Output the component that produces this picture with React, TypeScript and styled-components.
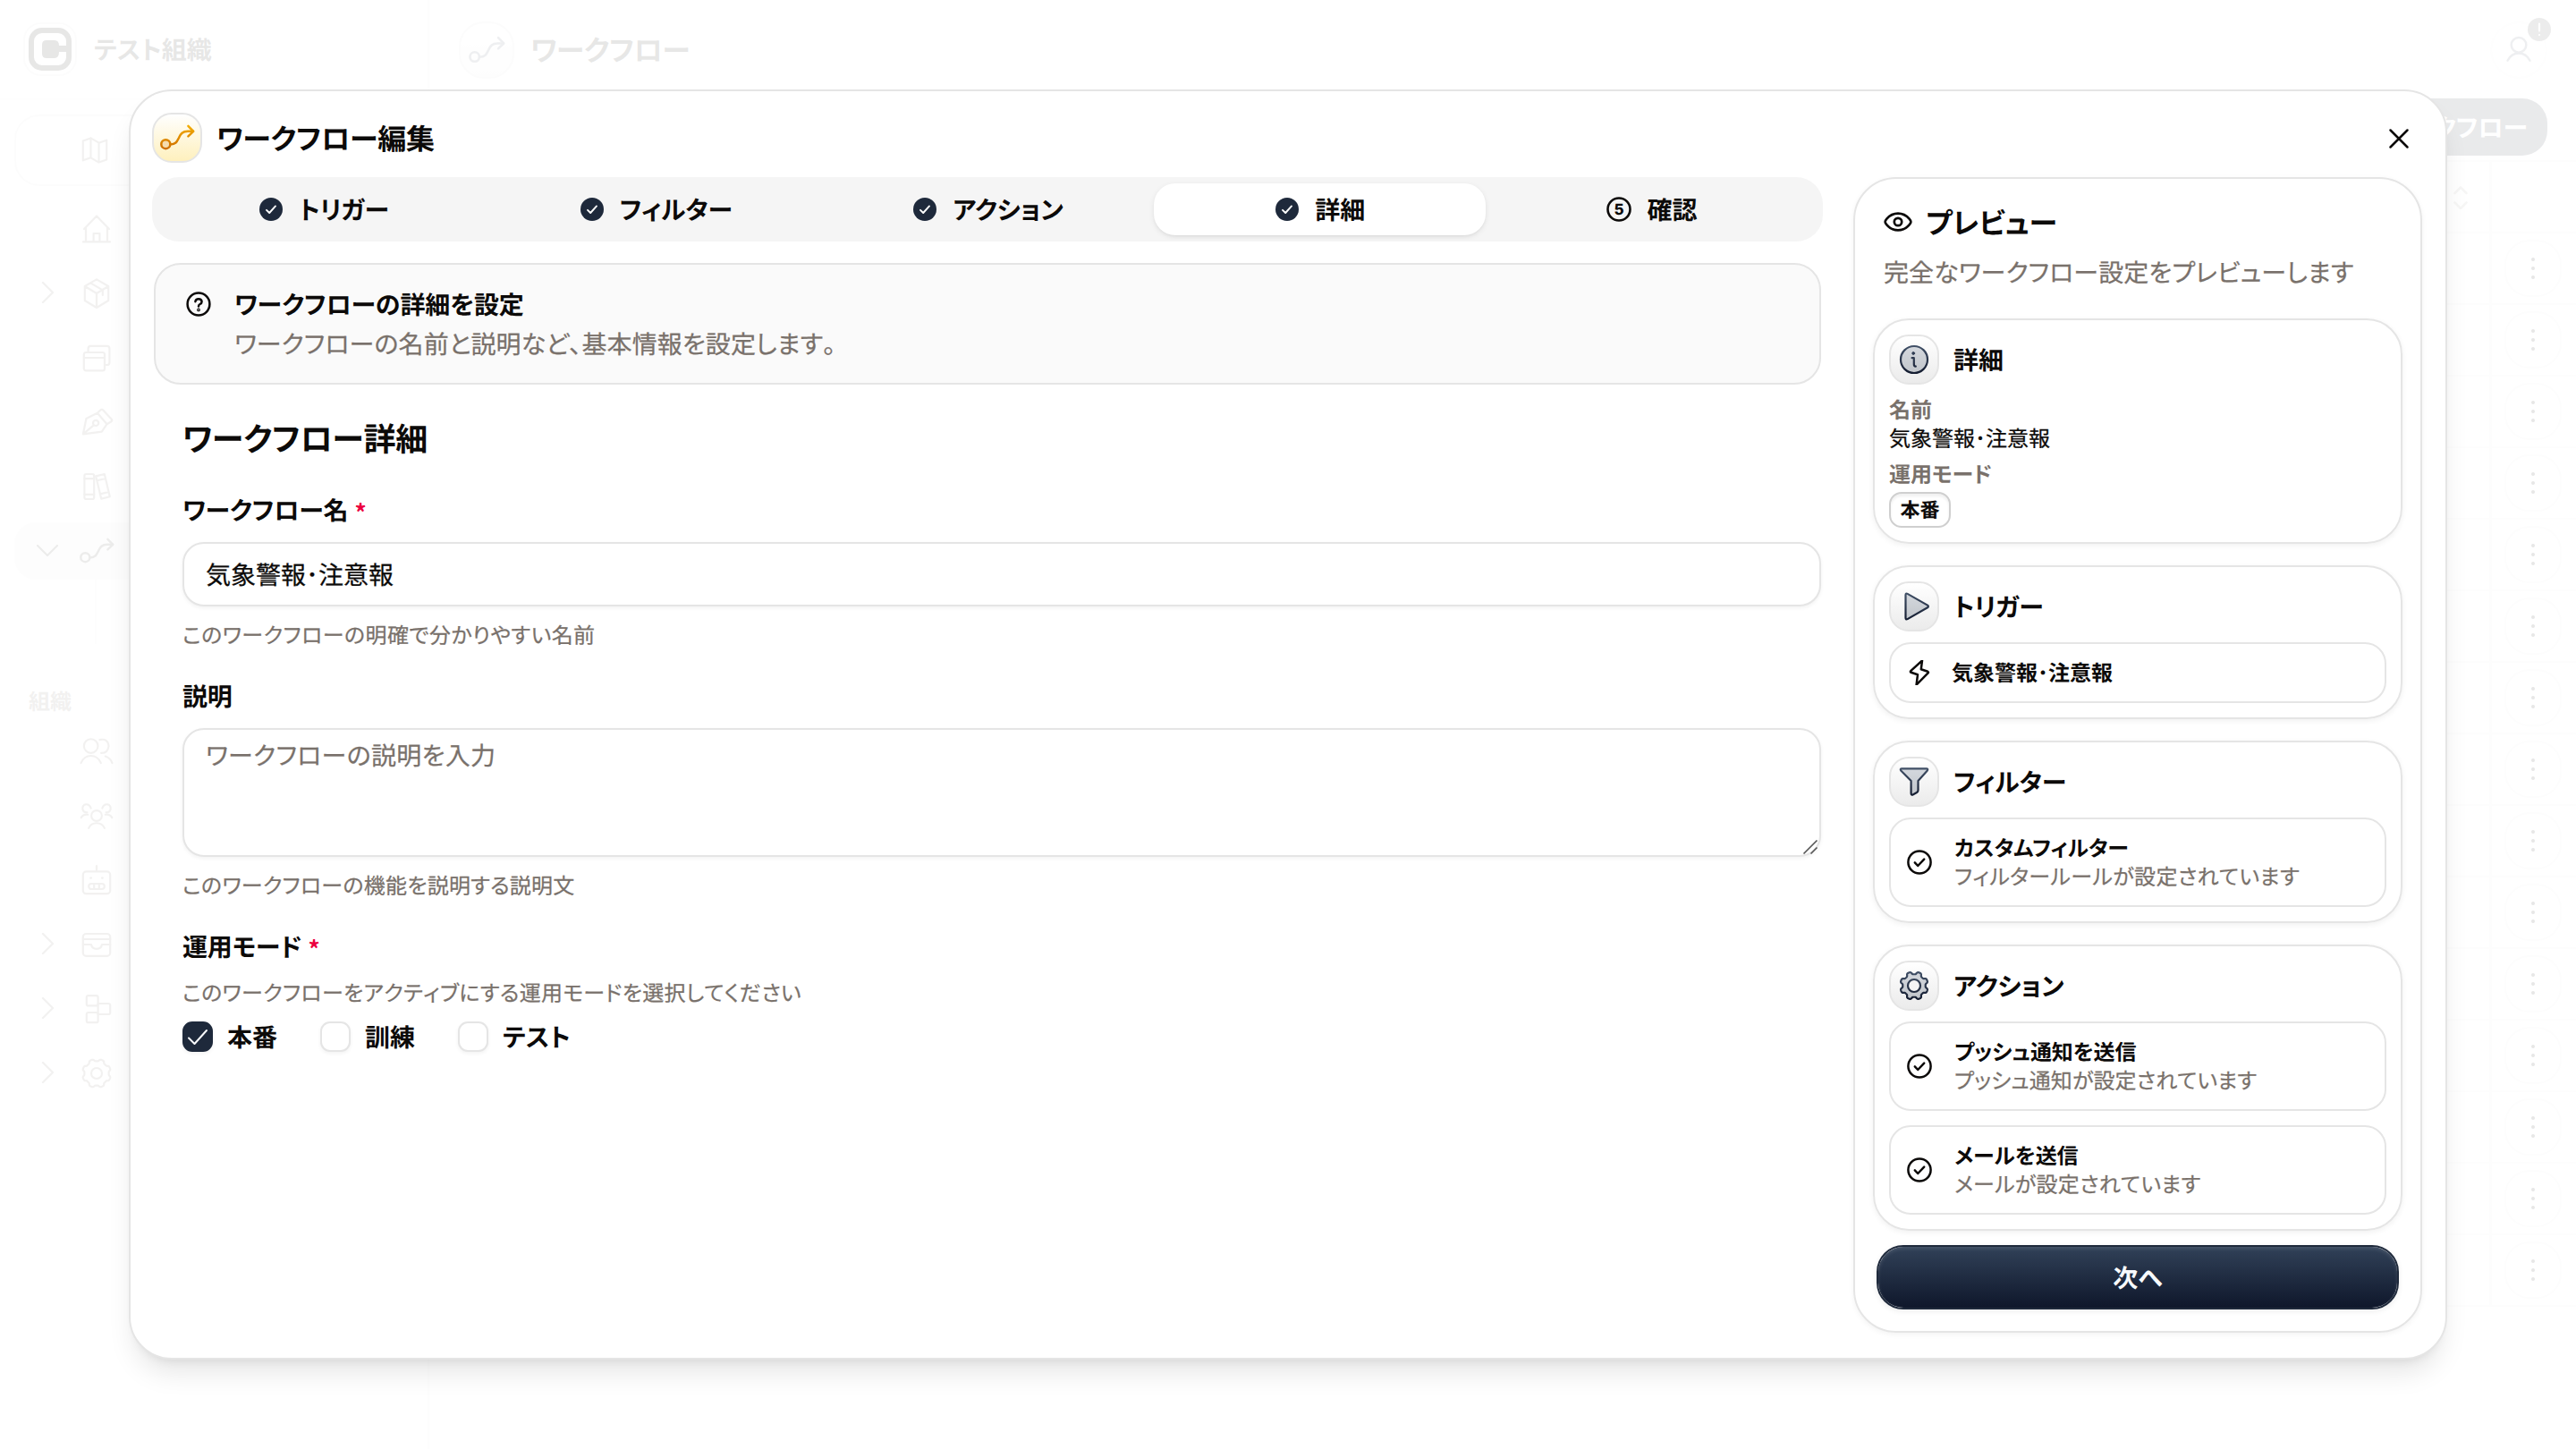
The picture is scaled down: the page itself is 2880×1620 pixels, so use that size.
import React from "react";
import styled, { createGlobalStyle, css } from "styled-components";

const ink = "#0c0a09";
const muted = "#79716b";
const line = "#e5e5e5";
const navy = "#1e293b";

const GlobalStyle = createGlobalStyle`
  *, *::before, *::after { box-sizing: border-box; }
  body {
    margin: 0;
    color: ${ink};
    background: #fff;
    font-family: "Noto Sans CJK JP", Inter, sans-serif;
    font-feature-settings: "palt";
    text-rendering: geometricPrecision;
    font-size: 28px;
    line-height: 40px;
  }
  h1, h2, h3, p { margin: 0; font-size: inherit; font-weight: inherit; }
  button, input, textarea {
    font: inherit;
    font-feature-settings: inherit;
    text-rendering: inherit;
    color: inherit;
  }
`;

/* ---------- icons ---------- */

type IconProps = {
  size?: number;
  sw?: number;
  box?: number;
  children?: React.ReactNode;
};

const Icon = ({ size = 36, sw = 1.5, box = 18, children }: IconProps) => (
  <svg
    width={size}
    height={size}
    viewBox={`0 0 ${box} ${box}`}
    fill="none"
    stroke="currentColor"
    strokeWidth={sw}
    strokeLinecap="round"
    strokeLinejoin="round"
  >
    {children}
  </svg>
);

const gearPath = (c: number, r: number, a: number) => {
  const pts: string[] = [];
  for (let i = 0; i < 192; i++) {
    const t = (i / 192) * Math.PI * 2;
    const rr = r - a * Math.tanh(2.2 * Math.cos(8 * t));
    pts.push(`${(c + rr * Math.cos(t)).toFixed(2)} ${(c + rr * Math.sin(t)).toFixed(2)}`);
  }
  return `M${pts.join("L")}Z`;
};

const RouteIcon = ({ size = 40, stroke = "currentColor", fill = "none" }: { size?: number; stroke?: string; fill?: string }) => (
  <svg width={size} height={size} viewBox="0 0 40 40" fill="none" stroke={stroke} strokeWidth="2.5" strokeLinecap="round" strokeLinejoin="round">
    <defs>
      <linearGradient id="amber" gradientUnits="userSpaceOnUse" x1="0" y1="5" x2="0" y2="34">
        <stop offset="0" stopColor="#f5b000" />
        <stop offset="1" stopColor="#cc6a00" />
      </linearGradient>
    </defs>
    <circle cx="7.3" cy="27.2" r="5" fill={fill} />
    <path d="M12.5 27.4C19 27.4 20 24 22 20C24 15.5 26 12.8 32 12.8H38" />
    <path d="M32.4 6.8L38.2 12.8L32.4 18.4" />
  </svg>
);

const CheckBadge = () => (
  <svg width="28" height="28" viewBox="0 0 28 28" fill="none">
    <circle cx="14" cy="14" r="13" fill={navy} />
    <path d="M9 14.8L12.2 18L19 10.4" stroke="#fff" strokeWidth="1.9" strokeLinecap="round" strokeLinejoin="round" />
  </svg>
);

const CheckCircle = () => (
  <Icon size={28} box={28} sw={2.5}>
    <circle cx="14" cy="14" r="12.6" />
    <path d="M8.8 14.4L12.2 18L19.2 10.6" />
  </Icon>
);

const Duo = ({ children }: { children: React.ReactNode }) => (
  <svg width="36" height="36" viewBox="0 0 36 36" fill="url(#duoFill)" stroke="url(#duoStroke)" strokeWidth="2.2" strokeLinecap="round" strokeLinejoin="round">
    <defs>
      <linearGradient id="duoStroke" gradientUnits="userSpaceOnUse" x1="0" y1="0" x2="0" y2="36">
        <stop offset="0" stopColor="#45556c" />
        <stop offset="1" stopColor="#0f172b" />
      </linearGradient>
      <linearGradient id="duoFill" gradientUnits="userSpaceOnUse" x1="0" y1="0" x2="0" y2="36">
        <stop offset="0" stopColor="#d6dae0" />
        <stop offset="1" stopColor="#bfc3c8" />
      </linearGradient>
    </defs>
    {children}
  </svg>
);

const InfoDuo = () => (
  <Duo>
    <circle cx="18" cy="18" r="15" />
    <path d="M15.6 16.2H17.8V23.2Q17.8 25.4 19.8 25.6" fill="none" />
    <circle cx="17.2" cy="11" r="1.4" fill="#2b394f" strokeWidth="1" />
  </Duo>
);
const PlayDuo = () => (
  <Duo>
    <path d="M8.5 5.2Q8.5 2.8 10.6 3.9L33 16.6Q34.8 18 33 19.3L10.6 32.1Q8.5 33.2 8.5 30.8Z" />
  </Duo>
);
const FunnelDuo = () => (
  <Duo>
    <path d="M4.2 3.4H31.8Q34 3.4 32.8 5.4L22.5 17V27.5Q22.5 29 21 30L17 32.2Q14.6 33.4 14.6 31V17L3.2 5.4Q2 3.4 4.2 3.4Z" />
  </Duo>
);
const GearDuo = () => (
  <Duo>
    <path d={gearPath(18, 14.2, 1.5)} />
    <circle cx="18" cy="18" r="7" fill="#f4f4f5" />
  </Duo>
);

/* ---------- page behind the dialog ---------- */

const Screen = styled.div`
  position: relative;
  width: 2880px;
  height: 1620px;
  overflow: hidden;
  background: #fff;
`;

const Page = styled.div`
  display: flex;
  width: 100%;
  height: 100%;
`;

const Sidebar = styled.aside`
  display: flex;
  flex-direction: column;
  flex: 0 0 480px;
  border-right: 2px solid ${line};
  background: #fafafa;
`;

const OrgRow = styled.div`
  display: flex;
  align-items: center;
  gap: 24px;
  height: 112px;
  padding-left: 26px;
  border-bottom: 2px solid #efefef;
  font-weight: 600;
`;

const OrgLogo = styled.span`
  display: grid;
  place-items: center;
  width: 60px;
  height: 60px;
  margin-right: -5px;
  border: 2px solid #e2e2e2;
  border-radius: 20px;
  background: #fff;
`;

const MapPicker = styled.div`
  display: flex;
  align-items: center;
  height: 80px;
  margin: 16px 16px 12px;
  padding-left: 71px;
  border: 2px solid #e2e2e2;
  border-radius: 28px;
  color: ${muted};
`;

const NavList = styled.nav`
  display: flex;
  flex-direction: column;
  gap: 8px;
  padding: 4px 16px 0;
`;

const NavRow = styled.div<{ $active?: boolean }>`
  display: grid;
  grid-template-columns: 40px 36px;
  column-gap: 17px;
  align-items: center;
  justify-items: center;
  height: 64px;
  padding-left: 17px;
  border-radius: 24px;
  color: ${(p) => (p.$active ? "#44403b" : muted)};
  background: ${(p) => (p.$active ? "#ececec" : "transparent")};
`;

const SubTree = styled.div`
  height: 72px;
  margin: 0 16px 0 106px;
  border-left: 2px solid #e7e7e7;
`;

const NavHeading = styled.h3`
  margin: 47px 0 5px 32px;
  color: ${muted};
  font-size: 24px;
  line-height: 32px;
  font-weight: 600;
`;

const Main = styled.main`
  display: flex;
  flex: 1;
  flex-direction: column;
`;

const TopBar = styled.header`
  display: flex;
  align-items: center;
  height: 110px;
  padding: 2px 32px 0 33px;
`;

const PageTitle = styled.h1`
  flex: 1;
  margin-left: 18px;
  padding-bottom: 2px;
  font-size: 32px;
  font-weight: 600;
  letter-spacing: -0.5px;
`;

const GhostTile = styled.span<{ $round?: boolean }>`
  position: relative;
  display: grid;
  place-items: center;
  width: ${(p) => (p.$round ? "64px" : "62px")};
  height: 64px;
  border: 2px solid ${(p) => (p.$round ? "#f0f0f0" : "#dcdcdc")};
  border-radius: ${(p) => (p.$round ? "32px" : "28px")};
  background: ${(p) => (p.$round ? "#f8f8f8" : "linear-gradient(#ffffff, #ebebeb)")};
  color: #57606e;
`;

const AlertDot = styled.span`
  position: absolute;
  top: -6px;
  right: -6px;
  display: grid;
  place-items: center;
  width: 26px;
  height: 26px;
  border-radius: 50%;
  background: #404040;
  color: #fff;
`;

const Toolbar = styled.div`
  display: flex;
  justify-content: flex-end;
  height: 69px;
  padding-right: 32px;
`;

const CreateButton = styled.button`
  height: 64px;
  padding: 0 22px 0 24px;
  border: 0;
  border-radius: 28px;
  background: ${navy};
  color: #fff;
  font-weight: 600;
`;

const Table = styled.div`
  border-top: 2px solid ${line};
`;

const TableRow = styled.div`
  display: grid;
  grid-template-columns: 1fr 94px;
  height: 80px;
  border-bottom: 2px solid ${line};
`;

const Cell = styled.div<{ $end?: boolean }>`
  display: flex;
  align-items: center;
  justify-content: ${(p) => (p.$end ? "flex-end" : "center")};
  padding-right: ${(p) => (p.$end ? "18px" : "2px")};
  border-right: ${(p) => (p.$end ? `3px solid ${line}` : "0")};
  color: #a6a09b;
`;

const RowMenu = styled.span`
  display: flex;
  flex-direction: column;
  align-items: center;
  justify-content: center;
  gap: 5.6px;
  width: 64px;
  height: 64px;
  border: 2px solid #e5e5e5;
  border-radius: 28px;
`;

const MenuDot = styled.i`
  width: 4px;
  height: 4px;
  border-radius: 50%;
  background: ${ink};
`;

const Scrim = styled.div`
  position: absolute;
  inset: 0;
  background: rgba(255, 255, 255, 0.9);
`;

/* ---------- dialog ---------- */

const Dialog = styled.section`
  position: absolute;
  top: 100px;
  left: 144px;
  display: flex;
  flex-direction: column;
  gap: 16px;
  width: 2592px;
  height: 1420px;
  padding: 24px 26px 28px 24px;
  border: 2px solid ${line};
  border-radius: 48px;
  background: #fff;
  box-shadow: 0 20px 30px -6px rgba(0, 0, 0, 0.1), 0 8px 12px -8px rgba(0, 0, 0, 0.1);
`;

const DialogHeader = styled.header`
  display: flex;
  align-items: center;
  gap: 16px;
  height: 56px;
  padding-right: 10px;
`;

const IconTile = styled.span<{ $tone?: "amber" }>`
  display: grid;
  flex: none;
  place-items: center;
  width: 56px;
  height: 56px;
  border: 2px solid ${line};
  border-radius: 22px;
  background: ${(p) =>
    p.$tone === "amber"
      ? "linear-gradient(#ffffff, #fef0bd)"
      : "linear-gradient(#ffffff, #ebebeb)"};
`;

const DialogTitle = styled.h2`
  flex: 1;
  padding-bottom: 1px;
  font-size: 32px;
  font-weight: 700;
  letter-spacing: -0.15px;
`;

const CloseButton = styled.button`
  display: grid;
  place-items: center;
  width: 32px;
  height: 32px;
  padding: 0;
  border: 0;
  background: none;
`;

const DialogBody = styled.div`
  display: grid;
  grid-template-columns: 1868px 636px;
  column-gap: 34px;
  flex: 1;
  min-height: 0;
`;

const Tabs = styled.div`
  display: grid;
  grid-template-columns: repeat(5, 1fr);
  align-items: center;
  height: 72px;
  padding: 6px;
  border-radius: 30px;
  background: #f5f5f5;
`;

const Tab = styled.button<{ $active?: boolean }>`
  display: flex;
  align-items: center;
  justify-content: center;
  gap: 17px;
  height: 58px;
  padding: 0 0 0 1px;
  border: 0;
  border-radius: 24px;
  background: transparent;
  font-weight: 600;
  letter-spacing: -0.1px;
  ${(p) =>
    p.$active &&
    css`
      background: #fff;
      box-shadow: 0 2px 6px rgba(0, 0, 0, 0.08), 0 2px 4px -2px rgba(0, 0, 0, 0.08);
    `}
`;

const Notice = styled.div`
  display: grid;
  grid-template-columns: 28px 1fr;
  column-gap: 26px;
  height: 136px;
  margin: 24px 2px 0;
  padding: 24px 34px 0;
  border: 2px solid ${line};
  border-radius: 30px;
  background: #fafafa;
  svg { margin-top: 6px; }
`;

const NoticeText = styled.div`
  display: flex;
  flex-direction: column;
  gap: 4px;
`;

const Strong = styled.p`
  font-weight: 600;
  letter-spacing: -0.1px;
`;

const Muted = styled.p`
  color: ${muted};
  font-kerning: none;
  letter-spacing: 0.1px;
  -webkit-text-stroke: 0.25px currentColor;
`;

const Form = styled.form`
  display: flex;
  flex-direction: column;
  gap: 32px;
  margin: 32px 2px 0 34px;
`;

const FormTitle = styled.h2`
  height: 56px;
  padding-bottom: 2px;
  font-size: 36px;
  line-height: 54px;
  font-weight: 700;
  letter-spacing: -0.2px;
`;

const Field = styled.div`
  position: relative;
  display: flex;
  flex-direction: column;
  gap: 16px;
`;

const Label = styled.label`
  height: 40px;
  font-weight: 600;
  letter-spacing: -0.15px;
`;

const Required = styled.span`
  margin-left: 7px;
  color: #ec003f;
  font-size: 26px;
  line-height: 1;
  vertical-align: -2px;
`;

const Help = styled.p<{ $track?: number }>`
  padding-bottom: 2px;
  color: ${muted};
  font-size: 24px;
  line-height: 30px;
  font-kerning: none;
  letter-spacing: ${(p) => p.$track ?? 0.3}px;
  -webkit-text-stroke: 0.25px currentColor;
`;

const control = css`
  width: 100%;
  padding: 0 24px;
  border: 2px solid ${line};
  border-radius: 24px;
  background: #fff;
  box-shadow: 0 2px 4px rgba(0, 0, 0, 0.05);
  outline: none;
  font-kerning: none;
  -webkit-text-stroke: 0.25px currentColor;
`;

const TextInput = styled.input`
  ${control}
  height: 72px;
`;

const AreaWrap = styled.div`
  position: relative;
  height: 144px;
`;

const TextArea = styled.textarea`
  ${control}
  display: block;
  height: 144px;
  padding-top: 8px;
  resize: none;
  letter-spacing: 0.3px;
  &::placeholder { color: ${muted}; opacity: 1; }
`;

const Grip = styled.svg`
  position: absolute;
  right: 3px;
  bottom: 2px;
`;

const Options = styled.div`
  display: flex;
  align-items: center;
  gap: 48px;
  height: 34px;
`;

const Option = styled.label`
  display: flex;
  align-items: center;
  gap: 16px;
  font-weight: 600;
`;

const Checkbox = styled.span<{ $checked?: boolean }>`
  display: grid;
  place-items: center;
  width: 34px;
  height: 34px;
  border: 2px solid ${(p) => (p.$checked ? navy : line)};
  border-radius: 11px;
  background: ${(p) => (p.$checked ? navy : "#fff")};
  box-shadow: 0 2px 4px rgba(0, 0, 0, 0.05);
`;

/* ---------- preview ---------- */

const Preview = styled.aside`
  display: flex;
  flex-direction: column;
  height: 1292px;
  padding: 24px 20px;
  border: 2px solid ${line};
  border-radius: 48px;
  box-shadow: 0 2px 6px rgba(0, 0, 0, 0.05);
`;

const PreviewHeader = styled.header`
  display: flex;
  flex-direction: column;
  gap: 12px;
  margin: 0 12px 32px;
`;

const PreviewTitle = styled.h2`
  display: flex;
  align-items: center;
  gap: 15px;
  height: 48px;
  font-size: 32px;
  line-height: 46px;
  font-weight: 600;
`;

const Cards = styled.div`
  display: flex;
  flex-direction: column;
  gap: 24px;
`;

const Card = styled.article`
  display: flex;
  flex-direction: column;
  padding: 16px;
  border: 2px solid ${line};
  border-radius: 40px;
  box-shadow: 0 2px 6px rgba(0, 0, 0, 0.06);
`;

const CardHead = styled.h3`
  display: flex;
  align-items: center;
  gap: 16px;
  margin-bottom: 12px;
  font-weight: 600;
  letter-spacing: -0.1px;
`;

const Small = styled.p<{ $muted?: boolean; $bold?: boolean; $track?: number }>`
  padding-bottom: 2px;
  color: ${(p) => (p.$muted ? muted : ink)};
  font-size: 24px;
  line-height: 30px;
  font-weight: ${(p) => (p.$bold ? 600 : 400)};
  font-kerning: ${(p) => (p.$bold ? "auto" : "none")};
  letter-spacing: ${(p) => p.$track ?? 0}px;
  -webkit-text-stroke: ${(p) => (p.$bold ? "0" : "0.25px currentColor")};
`;

const Details = styled.div`
  display: flex;
  flex-direction: column;
  align-items: flex-start;
`;

const ModeLabel = styled(Small)`
  margin: 8px 0 4px;
`;

const Badge = styled.span`
  display: grid;
  place-items: center;
  width: 69px;
  height: 40px;
  padding-bottom: 2px;
  border: 2px solid #cfcfcf;
  border-radius: 14px;
  box-shadow: inset 0 3px 3px rgba(0, 0, 0, 0.06);
  font-size: 22px;
  line-height: 32px;
  font-weight: 600;
`;

const Items = styled.div`
  display: flex;
  flex-direction: column;
  gap: 16px;
`;

const Item = styled.div<{ $gap: number }>`
  display: flex;
  align-items: center;
  gap: ${(p) => p.$gap}px;
  padding: 16px 18px;
  border: 2px solid ${line};
  border-radius: 24px;
`;

const NextButton = styled.button`
  height: 72px;
  margin: 16px 4px 0;
  border: 2px solid ${navy};
  border-radius: 30px;
  background: linear-gradient(#314158, #0f172b) padding-box;
  box-shadow: inset 0 2px 4px rgba(255, 255, 255, 0.12), 0 2px 6px rgba(0, 0, 0, 0.08);
  color: #f8fafc;
  font-weight: 600;
`;

/* ---------- data ---------- */

const chevronRight = (
  <Icon size={24} box={24} sw={2.2}>
    <path d="M7 1L18 12L7 23" />
  </Icon>
);
const chevronDown = (
  <Icon size={24} box={24} sw={2.2}>
    <path d="M1 7L12 18L23 7" />
  </Icon>
);

const nav: { icon: React.ReactNode; chevron?: React.ReactNode; active?: boolean }[] = [
  { icon: <Icon sw={1.1}><path d="M2 9L9 1.8L16 9M3 8V16.2M15 8V16.2M1.5 16.2H16.5M7.3 16V11.5H10.7V16" /></Icon> },
  { icon: <Icon sw={1.1}><path d="M9 1.2L15.6 5V13L9 17L2.4 13V5ZM2.4 5L9 9L15.6 5M9 9V17M5.6 3.2L12.4 7.2V10" /></Icon>, chevron: chevronRight },
  { icon: <Icon sw={1.1}><rect x="1.9" y="6" width="11.6" height="10.2" rx="1.2" /><path d="M1.9 9H13.5M4.3 6V3.8Q4.3 2.4 5.7 2.4H14.8Q16.2 2.4 16.2 3.8V11.6Q16.2 13 14.8 13H13.5" /></Icon> },
  { icon: <Icon size={40} sw={1}><path d="M2.2 15L3.8 7.2L9.4 4.4L14.2 10L11.6 13.8ZM9.4 4.4L10.8 3Q11.6 2.2 12.4 3L16.6 7.6Q17 8.2 16.2 8.8L14.2 10M2.2 15L7.4 10.6" /><circle cx="8.6" cy="9.4" r="1.4" /></Icon> },
  { icon: <Icon sw={1.1}><rect x="2.2" y="2" width="5.4" height="14" rx="1" /><path d="M2.2 4.6H7.6M2.2 13.4H7.6M8.6 3.2L13.4 2L16.4 14.6L11.6 15.8ZM9.2 5.6L14 4.5M10.9 13.2L15.8 12" /></Icon> },
  { icon: <RouteIcon />, chevron: chevronDown, active: true },
];

const orgNav: { icon: React.ReactNode; chevron?: React.ReactNode }[] = [
  { icon: <Icon size={38} sw={1}><circle cx="6" cy="6.2" r="3.7" /><path d="M0.7 15.2Q2.4 11.4 6 11.4T11.3 15.2M10.6 2.9Q15 2 15.4 6.2Q15 10 11.4 9.9M13.6 11.6Q16.2 12.4 17.3 15.2" /></Icon> },
  { icon: <Icon size={38} sw={1}><circle cx="9" cy="9" r="2.8" /><path d="M4.8 15.6Q6 12.9 9 12.9T13.2 15.6M6 5Q5.2 2.8 3.2 3Q1.4 3.4 1.6 5.6Q2 7.4 4 7.2M0.8 10Q2 8 4.4 8.4M12 5Q12.8 2.8 14.8 3Q16.6 3.4 16.4 5.6Q16 7.4 14 7.2M17.2 10Q16 8 13.6 8.4" /></Icon> },
  { icon: <Icon sw={1.1}><rect x="1.4" y="4.2" width="15.2" height="12.4" rx="1.8" /><path d="M9 4V1M5.6 7.8H6M12 7.8H12.4" /><rect x="4.6" y="11" width="8.8" height="3" rx="1.5" /><path d="M7.6 11V14M10.4 11V14" /></Icon> },
  { icon: <Icon sw={1.1}><rect x="1.4" y="3" width="15.2" height="12.4" rx="1.8" /><path d="M1.4 6H16.6M1.4 9H6Q6.4 11.4 9 11.4T12 9H16.6" /></Icon>, chevron: chevronRight },
  { icon: <Icon sw={1.1}><rect x="3.4" y="1.6" width="6.4" height="5.6" rx="1" /><rect x="3.4" y="11" width="6.4" height="5.6" rx="1" /><path d="M9.8 6H15.6Q16.6 6 16.6 7V11Q16.6 12 15.6 12H9.8ZM9.8 7.2V11" /></Icon>, chevron: chevronRight },
  { icon: <Icon sw={1.1}><path d={gearPath(9, 7.4, 0.6)} /><circle cx="9" cy="9" r="3" /></Icon>, chevron: chevronRight },
];

const steps = [
  { label: "トリガー", done: true },
  { label: "フィルター", done: true },
  { label: "アクション", done: true },
  { label: "詳細", done: true, active: true },
  { label: "確認", done: false },
];

const StepNumber = () => (
  <svg width="28" height="28" viewBox="0 0 28 28" fill="none">
    <circle cx="14" cy="14" r="12.5" stroke={ink} strokeWidth="2.6" />
    <text x="14" y="20.2" textAnchor="middle" fontSize="17" fontWeight="800" fill={ink} fontFamily="Inter, sans-serif">5</text>
  </svg>
);

const modes = [
  { label: "本番", checked: true },
  { label: "訓練", checked: false },
  { label: "テスト", checked: false },
];

const workflowName = "気象警報･注意報";

const actions = [
  { title: "プッシュ通知を送信", text: "プッシュ通知が設定されています", track: 0.08 },
  { title: "メールを送信", text: "メールが設定されています", track: 0.25 },
];

const StatusItem = ({ title, text, track }: { title: string; text: string; track: number }) => (
  <Item $gap={25}>
    <CheckCircle />
    <div>
      <Small $bold $track={-0.1}>{title}</Small>
      <Small $muted $track={track}>{text}</Small>
    </div>
  </Item>
);

const Backdrop = () => (
  <Page>
    <Sidebar>
      <OrgRow>
        <OrgLogo>
          <svg width="48" height="48" viewBox="0 0 48 48">
            <rect x="3" y="3" width="42" height="42" rx="12" fill="none" stroke={ink} strokeWidth="6" />
            <path d="M20 14H29Q34 14 34 20H48V27H34Q34 34 29 34H20Q15 34 15 29V19Q15 14 20 14Z" fill={ink} />
          </svg>
        </OrgLogo>
        テスト組織
      </OrgRow>
      <MapPicker>
        <Icon size={34} sw={1.1}><path d="M2 3.4L6.6 1.8L11.4 4.6L16 3V14.6L11.4 16.2L6.6 13.4L2 15ZM6.6 1.8V13.4M11.4 4.6V16.2" /></Icon>
      </MapPicker>
      <NavList>
        {nav.map((n, i) => (
          <NavRow key={i} $active={n.active}>
            <span>{n.chevron}</span>
            {n.icon}
          </NavRow>
        ))}
      </NavList>
      <SubTree />
      <NavHeading>組織</NavHeading>
      <NavList>
        {orgNav.map((n, i) => (
          <NavRow key={i}>
            <span>{n.chevron}</span>
            {n.icon}
          </NavRow>
        ))}
      </NavList>
    </Sidebar>
    <Main>
      <TopBar>
        <GhostTile><RouteIcon size={42} /></GhostTile>
        <PageTitle>ワークフロー</PageTitle>
        <GhostTile $round>
          <Icon size={34} sw={1.3}><circle cx="9" cy="6" r="4.4" /><path d="M2.4 15.2Q4.6 10.8 9 10.8T15.6 15.2" /></Icon>
          <AlertDot>
            <Icon size={20} box={20} sw={2.2}><path d="M10 3.5V11.5M10 16V16.1" /></Icon>
          </AlertDot>
        </GhostTile>
      </TopBar>
      <Toolbar>
        <CreateButton>ワークフロー</CreateButton>
      </Toolbar>
      <Table>
        <TableRow>
          <Cell $end>
            <Icon size={28} box={28} sw={2.6}><path d="M7.5 10L14 3.5L20.5 10M7.5 20.5L14 27L20.5 20.5" /></Icon>
          </Cell>
          <Cell />
        </TableRow>
        {Array.from({ length: 15 }, (_, i) => (
          <TableRow key={i}>
            <Cell $end />
            <Cell>
              <RowMenu>
                <MenuDot />
                <MenuDot />
                <MenuDot />
              </RowMenu>
            </Cell>
          </TableRow>
        ))}
      </Table>
    </Main>
  </Page>
);

export default function App() {
  return (
    <Screen>
      <GlobalStyle />
      <Backdrop />
      <Scrim />
      <Dialog>
        <DialogHeader>
          <IconTile $tone="amber">
            <RouteIcon stroke="url(#amber)" fill="#f6dcae" />
          </IconTile>
          <DialogTitle>ワークフロー編集</DialogTitle>
          <CloseButton>
            <Icon size={32} box={32} sw={2.5}><path d="M6.5 7.5L25.5 26.5M25.5 7.5L6.5 26.5" /></Icon>
          </CloseButton>
        </DialogHeader>
        <DialogBody>
          <div>
            <Tabs>
              {steps.map((s) => (
                <Tab key={s.label} $active={s.active}>
                  {s.done ? <CheckBadge /> : <StepNumber />}
                  {s.label}
                </Tab>
              ))}
            </Tabs>
            <Notice>
              <Icon size={28} box={28} sw={2.5}>
                <circle cx="14" cy="14" r="12.4" />
                <path d="M10.4 11.2Q10.8 8.2 14 8.2T17.6 11.2Q17.6 13 15.6 14Q14 14.8 14 16.4" />
                <circle cx="14" cy="20.4" r="0.6" />
              </Icon>
              <NoticeText>
                <Strong>ワークフローの詳細を設定</Strong>
                <Muted>ワークフローの名前と説明など、基本情報を設定します。</Muted>
              </NoticeText>
            </Notice>
            <Form>
              <FormTitle>ワークフロー詳細</FormTitle>
              <Field>
                <Label>ワークフロー名<Required>*</Required></Label>
                <TextInput defaultValue={workflowName} />
                <Help $track={0.43}>このワークフローの明確で分かりやすい名前</Help>
              </Field>
              <Field>
                <Label>説明</Label>
                <AreaWrap>
                  <TextArea placeholder="ワークフローの説明を入力" />
                  <Grip width="18" height="18" viewBox="0 0 18 18" stroke="#555" strokeWidth="1.6">
                    <path d="M1.5 16.5L16.5 1.5M9.5 16.5L16.5 9.5" />
                  </Grip>
                </AreaWrap>
                <Help $track={0.24}>このワークフローの機能を説明する説明文</Help>
              </Field>
              <Field>
                <Label>運用モード<Required>*</Required></Label>
                <Help $track={0.32}>このワークフローをアクティブにする運用モードを選択してください</Help>
                <Options>
                  {modes.map((m) => (
                    <Option key={m.label}>
                      <Checkbox $checked={m.checked}>
                        {m.checked && (
                          <svg width="26" height="26" viewBox="0 0 26 26" fill="none">
                            <path d="M3 14.5L9.5 21L23 6" stroke="#f8fafc" strokeWidth="2" strokeLinecap="round" strokeLinejoin="round" />
                          </svg>
                        )}
                      </Checkbox>
                      {m.label}
                    </Option>
                  ))}
                </Options>
              </Field>
            </Form>
          </div>
          <Preview>
            <PreviewHeader>
              <PreviewTitle>
                <Icon size={32} box={32} sw={2.7}>
                  <path d="M1.6 16Q1.6 14.6 3.4 12.6Q8.6 6.6 16 6.6T28.6 12.6Q30.4 14.6 30.4 16T28.6 19.4Q23.4 25.4 16 25.4T3.4 19.4Q1.6 17.4 1.6 16Z" />
                  <circle cx="16" cy="16" r="4.2" />
                </Icon>
                プレビュー
              </PreviewTitle>
              <Muted>完全なワークフロー設定をプレビューします</Muted>
            </PreviewHeader>
            <Cards>
              <Card>
                <CardHead><IconTile><InfoDuo /></IconTile>詳細</CardHead>
                <Details>
                  <Small $muted $bold>名前</Small>
                  <Small>{workflowName}</Small>
                  <ModeLabel $muted $bold>運用モード</ModeLabel>
                  <Badge>本番</Badge>
                </Details>
              </Card>
              <Card>
                <CardHead><IconTile><PlayDuo /></IconTile>トリガー</CardHead>
                <Item $gap={22}>
                  <Icon size={28} box={28} sw={2.5}>
                    <path d="M17 1.5L4.2 13.2Q3.4 14.2 4.6 14.8L12 17.2L10.6 28.6L23.6 15.4Q24.4 14.4 23.2 13.8L15.8 11.2Z" transform="translate(0 -1)" />
                  </Icon>
                  <Small $bold>{workflowName}</Small>
                </Item>
              </Card>
              <Card>
                <CardHead><IconTile><FunnelDuo /></IconTile>フィルター</CardHead>
                <StatusItem title="カスタムフィルター" text="フィルタールールが設定されています" track={0.38} />
              </Card>
              <Card>
                <CardHead><IconTile><GearDuo /></IconTile>アクション</CardHead>
                <Items>
                  {actions.map((a) => (
                    <StatusItem key={a.title} {...a} />
                  ))}
                </Items>
              </Card>
            </Cards>
            <NextButton>次へ</NextButton>
          </Preview>
        </DialogBody>
      </Dialog>
    </Screen>
  );
}
